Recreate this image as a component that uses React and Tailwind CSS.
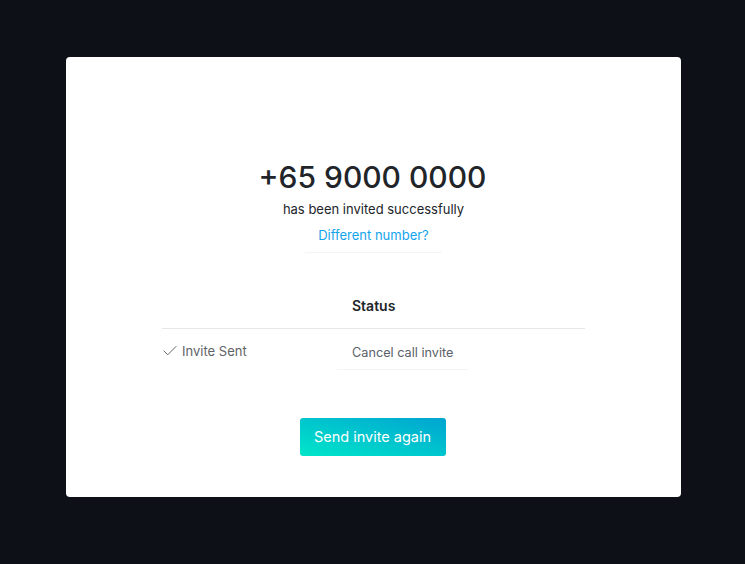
import { Check } from "lucide-react";

export default function App() {
    return (
        <div className="min-h-[564px] bg-[#0d1117] pt-[57px]" style={{ fontFamily: "Inter, 'Noto Sans', sans-serif" }}>
            <div className="ml-[66px] w-[615px] h-[440px] bg-white rounded-[4px] flex flex-col items-center pt-[100px]">
                <h1 className="-ml-[2px] text-[30px] leading-[40px] font-medium text-[#212529]">+65 9000 0000</h1>
                <p className="mt-[2px] text-[13px] leading-[20px] text-[#212529]">has been invited successfully</p>
                <button className="mt-[2px] px-[13px] pt-[4px] pb-[7px] leading-[20px] text-[13px] text-[#12a3ec] shadow-[0_1px_0_#f3f4f6]">
                    Different number?
                </button>

                {/* Status table */}
                <table className="mt-[44px] w-[423px] text-[13px]">
                    <thead>
                        <tr className="border-b border-[#e5e7eb]">
                            <th className="w-[175px]"></th>
                            <th className="text-left text-[14px] font-semibold text-[#212529] pl-[15px] pb-[12px] leading-[20px]">Status</th>
                        </tr>
                    </thead>
                    <tbody>
                        <tr>
                            <td className="pt-[12px] align-top">
                                <div className="flex items-center gap-[3px] leading-[20px] text-[#5f6368]">
                                    <Check size={18} strokeWidth={1.3} className="-ml-[1px]" />
                                    <span>Invite Sent</span>
                                </div>
                            </td>
                            <td className="pt-[10px] align-top">
                                <button className="px-[15px] pt-[4px] pb-[6px] leading-[20px] text-[12.7px] text-[#5a6068] shadow-[0_1px_0_#f3f4f6]">
                                    Cancel call invite
                                </button>
                            </td>
                        </tr>
                    </tbody>
                </table>

                <button className="-ml-[2px] mt-[49px] w-[146px] h-[38px] rounded-[3px] text-white text-[14.5px] bg-gradient-to-tr from-[#04e6c8] to-[#03a4d0]">
                    Send invite again
                </button>
            </div>
        </div>
    );
}
